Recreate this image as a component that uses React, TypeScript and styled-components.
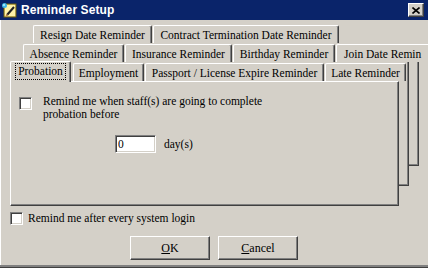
import React from 'react'
import styled, { createGlobalStyle } from 'styled-components'

const GlobalStyle = createGlobalStyle`
  html, body {
    margin: 0;
    padding: 0;
    background: #d4d0c8;
  }
`

const Window = styled.div`
  width: 428px;
  height: 268px;
  box-sizing: border-box;
  background: #d4d0c8;
  border-bottom: 1px solid #404040;
  box-shadow: inset 0 -2px #808080, inset 1px 0 #fff;
  display: flex;
  flex-direction: column;
  overflow: hidden;
  font-family: 'Liberation Serif', 'Times New Roman', serif;
  font-size: 11.5px;
  color: #000;
`

const TitleBar = styled.div`
  height: 20px;
  flex: none;
  background: #0a246a;
  display: flex;
  align-items: center;
  padding: 0 4px 0 1px;
  gap: 4px;
`

const Title = styled.span`
  flex: 1;
  color: #fff;
  font-family: 'Liberation Sans', Arial, sans-serif;
  font-weight: bold;
  font-size: 12px;
  letter-spacing: 0.1px;
`

const CloseButton = styled.div`
  width: 16px;
  height: 14px;
  box-sizing: border-box;
  background: #d4d0c8;
  border-top: 1px solid #fff;
  border-left: 1px solid #fff;
  border-right: 1px solid #404040;
  border-bottom: 1px solid #404040;
  box-shadow: inset -1px -1px #808080;
  display: flex;
  align-items: center;
  justify-content: center;
`

const TabRow = styled.div<{ $indent: number }>`
  display: flex;
  align-items: flex-end;
  height: 19px;
  flex: none;
  margin-left: ${(p) => p.$indent}px;
  gap: 1px;
  position: relative;
`

const Tab = styled.div<{ $w: number; $active?: boolean }>`
  width: ${(p) => p.$w}px;
  height: ${(p) => (p.$active ? 21 : 18)}px;
  flex: none;
  box-sizing: border-box;
  background: #d4d0c8;
  border-top: 1px solid #fff;
  border-left: 1px solid #fff;
  border-right: 1px solid #404040;
  box-shadow: inset -1px 0 #808080;
  border-radius: 2px 2px 0 0;
  display: flex;
  align-items: center;
  justify-content: center;
  white-space: nowrap;
  overflow: hidden;
  margin: ${(p) => (p.$active ? '0 -2px -1px -2px' : '0')};
  padding-bottom: ${(p) => (p.$active ? 1 : 0)}px;
  position: relative;
  z-index: ${(p) => (p.$active ? 2 : 1)};
`

// the last tab of the middle row runs past the window edge
const OpenTab = styled(Tab)`
  justify-content: flex-start;
  padding-left: 7px;
  border-right: none;
  box-shadow: none;
  border-top-right-radius: 0;
`

const Focus = styled.span`
  outline: 1px dotted #000;
  outline-offset: 1px;
  padding: 0 1px;
  line-height: 13px;
`

const Lower = styled.div`
  display: flex;
  align-items: flex-start;
  margin-left: 10px;
`

const FrontPage = styled.div`
  width: 389px;
  display: flex;
  flex-direction: column;
`

const Panel = styled.div`
  height: 125px;
  box-sizing: border-box;
  border-top: 1px solid #fff;
  border-left: 1px solid #fff;
  border-right: 1px solid #404040;
  border-bottom: 1px solid #404040;
  box-shadow: inset -1px -1px #808080;
  padding: 13px 8px 0 8px;
  display: flex;
  flex-direction: column;
`

const PageEdge = styled.div<{ $h: number }>`
  width: 10px;
  height: ${(p) => p.$h}px;
  flex: none;
  box-sizing: border-box;
  border-right: 1px solid #404040;
  border-bottom: 1px solid #404040;
  box-shadow: inset -1px -1px #808080;
`

const CheckRow = styled.div`
  display: flex;
  align-items: flex-start;
  gap: 11px;
`

const Check = styled.span`
  width: 13px;
  height: 13px;
  flex: none;
  box-sizing: border-box;
  background: #fff;
  border-top: 1px solid #808080;
  border-left: 1px solid #808080;
  border-right: 1px solid #fff;
  border-bottom: 1px solid #fff;
  box-shadow: inset 1px 1px #404040, inset -1px -1px #d4d0c8;
  margin-top: 2px;
`

const Label = styled.span`
  line-height: 13px;
`

const DaysRow = styled.div`
  display: flex;
  align-items: center;
  gap: 8px;
  margin: 14px 0 0 96px;
`

const NumberBox = styled.input`
  width: 41px;
  height: 18px;
  box-sizing: border-box;
  background: #fff;
  color: #000;
  border-top: 1px solid #808080;
  border-left: 1px solid #808080;
  border-right: 1px solid #fff;
  border-bottom: 1px solid #fff;
  box-shadow: inset 1px 1px #404040, inset -1px -1px #d4d0c8;
  padding: 0 2px;
  margin: 0;
  font: inherit;
  outline: none;
`

const LoginRow = styled(CheckRow)`
  margin: 6px 0 0 10px;
  gap: 5px;
  align-items: center;
`

const LoginCheck = styled(Check)`
  margin-top: 0;
`

const Buttons = styled.div`
  display: flex;
  justify-content: center;
  gap: 8px;
  margin-top: 11px;
`

const Button = styled.div`
  width: 80px;
  height: 24px;
  box-sizing: border-box;
  background: #d4d0c8;
  border-top: 1px solid #fff;
  border-left: 1px solid #fff;
  border-right: 1px solid #404040;
  border-bottom: 1px solid #404040;
  box-shadow: inset -1px -1px #808080;
  display: flex;
  align-items: center;
  justify-content: center;
  font-size: 12px;
`

function AppIcon() {
  return (
    <svg width='16' height='16' viewBox='0 0 16 16'>
      <rect x='3' y='2' width='12' height='13' fill='#f4e27a' stroke='#6b5a10' strokeWidth='1' />
      <rect x='4' y='3' width='10' height='11' fill='#fff3a8' />
      <path d='M6 13 L13 5' stroke='#222' strokeWidth='2' />
      <path d='M5 14 L6.5 12.5' stroke='#c08040' strokeWidth='1.5' />
      <circle cx='3.5' cy='3.5' r='2.5' fill='#3fb8e8' />
      <circle cx='3' cy='3' r='1' fill='#bfefff' />
    </svg>
  )
}

function CloseGlyph() {
  return (
    <svg width='8' height='7' viewBox='0 0 8 7'>
      <path d='M0.5 0.5 L7.5 6.5 M7.5 0.5 L0.5 6.5' stroke='#000' strokeWidth='1.6' />
    </svg>
  )
}

export default function App() {
  return (
    <Window>
      <GlobalStyle />
      <TitleBar>
        <AppIcon />
        <Title>Reminder Setup</Title>
        <CloseButton>
          <CloseGlyph />
        </CloseButton>
      </TitleBar>

      <TabRow $indent={33} style={{ marginTop: 4 }}>
        <Tab $w={119}>Resign Date Reminder</Tab>
        <Tab $w={186}>Contract Termination Date Reminder</Tab>
      </TabRow>
      <TabRow $indent={23}>
        <Tab $w={101}>Absence Reminder</Tab>
        <Tab $w={107}>Insurance Reminder</Tab>
        <Tab $w={102}>Birthday Reminder</Tab>
        <OpenTab $w={92}>Join Date Remin</OpenTab>
      </TabRow>

      <Lower>
        <FrontPage>
          <TabRow $indent={2}>
            <Tab $w={61} $active>
              <Focus>Probation</Focus>
            </Tab>
            <Tab $w={71} style={{ marginLeft: 3 }}>Employment</Tab>
            <Tab $w={179}>Passport / License Expire Reminder</Tab>
            <Tab $w={81}>Late Reminder</Tab>
          </TabRow>
          <Panel>
            <CheckRow>
              <Check />
              <Label>
                Remind me when staff(s) are going to complete
                <br />
                probation before
              </Label>
            </CheckRow>
            <DaysRow>
              <NumberBox defaultValue='0' />
              <span>day(s)</span>
            </DaysRow>
          </Panel>
        </FrontPage>
        <PageEdge $h={124} />
        <PageEdge $h={104} />
      </Lower>

      <LoginRow>
        <LoginCheck />
        <Label>Remind me after every system login</Label>
      </LoginRow>

      <Buttons>
        <Button>
          <u>O</u>K
        </Button>
        <Button>
          <u>C</u>ancel
        </Button>
      </Buttons>
    </Window>
  )
}
